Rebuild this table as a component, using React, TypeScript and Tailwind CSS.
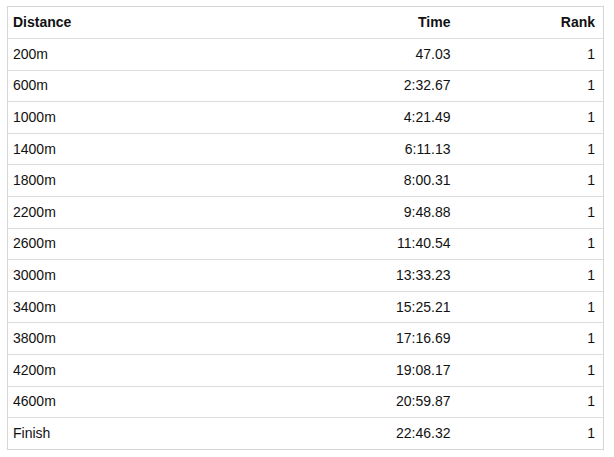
const rows = [
  ["200m", "47.03"],
  ["600m", "2:32.67"],
  ["1000m", "4:21.49"],
  ["1400m", "6:11.13"],
  ["1800m", "8:00.31"],
  ["2200m", "9:48.88"],
  ["2600m", "11:40.54"],
  ["3000m", "13:33.23"],
  ["3400m", "15:25.21"],
  ["3800m", "17:16.69"],
  ["4200m", "19:08.17"],
  ["4600m", "20:59.87"],
  ["Finish", "22:46.32"],
];

export default function App() {
  return (
    <div className="bg-white w-[614px] h-[457px] pt-[6px] pl-[7px] font-['Liberation_Sans',Arial,sans-serif] text-[14px] text-[#111]">
      <table className="w-[597px] border-collapse border border-[#d6d6d6] table-fixed">
        <colgroup>
          <col className="w-[293px]" />
          <col className="w-[158px]" />
          <col />
        </colgroup>
        <thead>
          <tr className="h-[32px]">
            <th className="text-left font-bold pl-[5px] pr-2 leading-[15px]">Distance</th>
            <th className="text-right font-bold pr-2 leading-[15px]">Time</th>
            <th className="text-right font-bold pr-2 leading-[15px]">Rank</th>
          </tr>
        </thead>
        <tbody>
          {rows.map(([d, t]) => (
            <tr key={d} className="h-[31.6px] border-t border-[#dcdcdc]">
              <td className="pl-[5px] pr-2 leading-[15px]">{d}</td>
              <td className="text-right pr-2 leading-[15px]">{t}</td>
              <td className="text-right pr-2 leading-[15px]">1</td>
            </tr>
          ))}
        </tbody>
      </table>
    </div>
  );
}
